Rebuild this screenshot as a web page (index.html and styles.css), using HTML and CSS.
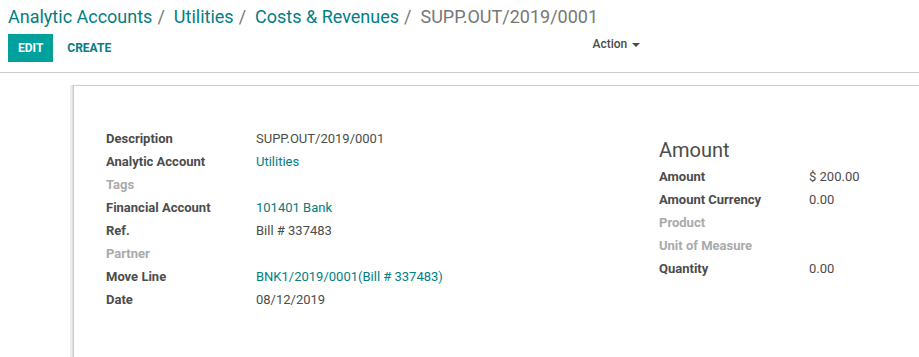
FILE: index.html
```html
<!DOCTYPE html>
<html lang="en">
<head>
  <meta charset="UTF-8" />
  <title>SUPP.OUT/2019/0001</title>
  <link rel="stylesheet" href="styles.css">
</head>
<body>
  <div class="control-panel">
    <ol class="breadcrumb">
      <li><a href="#">Analytic Accounts</a></li>
      <li><a href="#">Utilities</a></li>
      <li><a href="#">Costs &amp; Revenues</a></li>
      <li class="active">SUPP.OUT/2019/0001</li>
    </ol>
    <div class="cp-bottom">
      <div class="cp-buttons">
        <button class="btn btn-primary">Edit</button>
        <button class="btn btn-secondary">Create</button>
      </div>
      <div class="cp-sidebar">
        <button class="btn-action">Action <span class="caret"></span></button>
      </div>
    </div>
  </div>

  <div class="sheet-bg">
    <div class="sheet">
      <div class="group">
        <div class="group-col">
          <table class="inner-group">
            <tr><td class="label">Description</td><td>SUPP.OUT/2019/0001</td></tr>
            <tr><td class="label">Analytic Account</td><td><a href="#">Utilities</a></td></tr>
            <tr><td class="label muted">Tags</td><td></td></tr>
            <tr><td class="label">Financial Account</td><td><a href="#">101401 Bank</a></td></tr>
            <tr><td class="label">Ref.</td><td>Bill # 337483</td></tr>
            <tr><td class="label muted">Partner</td><td></td></tr>
            <tr><td class="label">Move Line</td><td><a href="#">BNK1/2019/0001(Bill # 337483)</a></td></tr>
            <tr><td class="label">Date</td><td>08/12/2019</td></tr>
          </table>
        </div>
        <div class="group-col group-col-right">
          <h2 class="group-title">Amount</h2>
          <table class="inner-group">
            <tr><td class="label">Amount</td><td>$ 200.00</td></tr>
            <tr><td class="label">Amount Currency</td><td>0.00</td></tr>
            <tr><td class="label muted">Product</td><td></td></tr>
            <tr><td class="label muted">Unit of Measure</td><td></td></tr>
            <tr><td class="label">Quantity</td><td>0.00</td></tr>
          </table>
        </div>
      </div>
    </div>
  </div>
</body>
</html>
```

FILE: styles.css
```css
:root {
  --teal: #00a09d;
  --link: #017e84;
  --text: #4c4c4c;
  --muted: #aaaaaa;
  --border: #cccccc;
}
* {
  box-sizing: border-box;
  margin: 0;
  padding: 0;
}
body {
  font-family: Roboto, "Noto Sans", sans-serif;
  font-size: 13px;
  color: var(--text);
  background: #fff;
  height: 357px;
  overflow: hidden;
}
a {
  color: var(--link);
  text-decoration: none;
}

/* ───── Control Panel ───── */
.control-panel {
  padding: 4px 8px 0;
  border-bottom: 1px solid var(--border);
  height: 73px;
}
.breadcrumb {
  list-style: none;
  display: flex;
  font-size: 18px;
  line-height: 26px;
  height: 26px;
}
.breadcrumb li + li::before {
  content: "/";
  color: #777;
  padding: 0 9px 0 5px;
}
.breadcrumb .active { color: #777; }

.cp-bottom {
  display: grid;
  grid-template-columns: 1fr 1fr;
  margin-top: 4px;
}
.cp-buttons {
  display: flex;
  gap: 4px;
}
.btn {
  font-family: inherit;
  font-size: 12px;
  font-weight: 700;
  text-transform: uppercase;
  height: 28px;
  padding: 0 10px;
  border: none;
  border-radius: 0;
  cursor: pointer;
}
.btn-primary {
  background: var(--teal);
  color: #fff;
}
.btn-secondary {
  background: transparent;
  color: var(--link);
}
.cp-sidebar {
  padding-left: 133px;
}
.btn-action {
  font-family: inherit;
  font-size: 12px;
  font-weight: 500;
  color: var(--text);
  background: none;
  border: none;
  height: 20px;
  cursor: pointer;
}
.caret {
  display: inline-block;
  width: 0;
  height: 0;
  margin-left: 2px;
  vertical-align: middle;
  border-top: 4px solid var(--text);
  border-left: 4px solid transparent;
  border-right: 4px solid transparent;
}

/* ───── Form Sheet ───── */
.sheet-bg {
  padding: 12px 0 0 73px;
}
.sheet {
  height: 272px;
  background: #fff;
  border-top: 1px solid var(--border);
  border-left: 1px solid var(--border);
  box-shadow: -1px 0 0 #e0e0e0, -3px 0 0 #ededed;
  padding: 41px 0 0 32px;
}
.group {
  display: flex;
}
.group-col {
  flex: none;
  width: 553px;
}
.group-col-right {
  width: auto;
}
.group-title {
  font-size: 20px;
  font-weight: 400;
  line-height: 24px;
  margin: 11px 0 3px;
  color: var(--text);
}
.inner-group {
  border-collapse: collapse;
}
.inner-group td {
  height: 23px;
  padding: 0;
  vertical-align: middle;
  white-space: nowrap;
}
.inner-group .label {
  width: 150px;
  font-weight: 700;
}
.inner-group .muted { color: var(--muted); }
```
